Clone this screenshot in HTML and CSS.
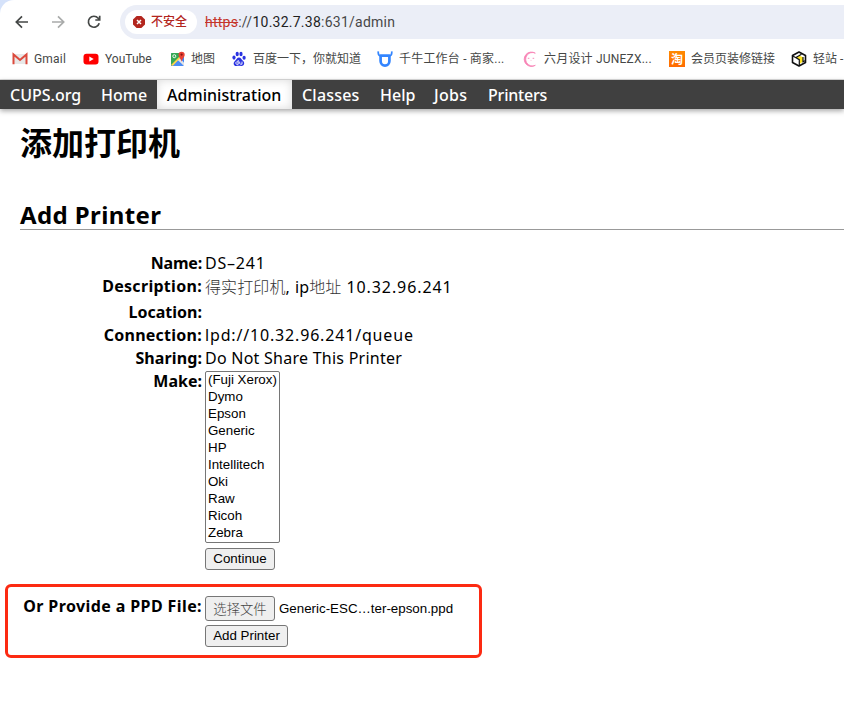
FILE: index.html
```html
<!DOCTYPE html>
<html lang="zh-CN">
<head>
<meta charset="utf-8">
<title>添加打印机</title>
<link rel="stylesheet" href="styles.css">
</head>
<body>
<header class="browser">
  <div class="toolbar">
    <svg class="nav-icon" viewBox="0 0 16 16"><path d="M14 8H2.5M8 2.3L2.3 8L8 13.7"/></svg>
    <svg class="nav-icon off" viewBox="0 0 16 16"><path d="M2 8H13.5M8 2.3L13.7 8L8 13.7"/></svg>
    <svg class="nav-icon" viewBox="0 0 16 16"><path d="M13.2 9.2A5.5 5.5 0 1 1 12.2 4.3L13.7 6M13.7 1.8V6H9.3"/></svg>
    <div class="address">
      <div class="chip">
        <svg width="12" height="12" viewBox="0 0 12 12"><path d="M3.6 0H8.4L12 3.6V8.4L8.4 12H3.6L0 8.4V3.6Z" fill="#b3261e"/><path d="M4 4L8 8M8 4L4 8" stroke="#fff" stroke-width="1.5"/></svg>
        <span>不安全</span>
      </div>
      <div class="url"><s>https</s>://<b>10.32.7.38</b>:631/admin</div>
    </div>
  </div>
  <nav class="bookmarks">
    <a class="b-gmail"><svg viewBox="0 0 16 16"><path d="M2 3H14V13H2Z" fill="#e8e8e8"/><path d="M1.5 13.3V3.5L8 9L14.5 3.5V13.3" fill="none" stroke="#dc4a3d" stroke-width="2"/></svg><span>Gmail</span></a>
    <a class="b-youtube"><svg viewBox="0 0 16 16"><rect x="0.5" y="2.8" width="15" height="10.6" rx="3" fill="#f00"/><path d="M6.3 5.5V10.6L10.7 8Z" fill="#fff"/></svg><span>YouTube</span></a>
    <a class="b-maps"><svg viewBox="0 0 16 16"><rect x="1" y="2" width="13" height="13" rx="1" fill="#4285f4"/><path d="M1 3Q1 2 2 2H14L1 15Z" fill="#34a853"/><path d="M1 14L13 2L14 4L3 15Z" fill="#fbd34c"/><path d="M3 15L8 9.5L13.5 15Z" fill="#4c8df6"/><path d="M8 9.3L10 7.4L14 11.5V15Z" fill="#e3e5e8"/><circle cx="4.3" cy="5.2" r="1.5" fill="none" stroke="#fff" stroke-width=".9"/><path d="M11.6 11C11.4 8 8.5 6.5 8.5 3.8A3.1 3.1 0 0 1 14.7 3.8C14.7 6.5 11.8 8 11.6 11Z" fill="#e94235"/><circle cx="11.6" cy="3.6" r="1.1" fill="#811411"/></svg><span>地图</span></a>
    <a class="b-baidu"><svg viewBox="0 0 16 16" fill="#2932e1"><ellipse cx="3" cy="6.6" rx="1.6" ry="2.1"/><ellipse cx="6.2" cy="3" rx="1.6" ry="2.2"/><ellipse cx="10" cy="3" rx="1.6" ry="2.2"/><ellipse cx="13.1" cy="6.7" rx="1.6" ry="2"/><path d="M8 6.5C10 6.5 10.5 8.7 12.2 10C14.2 12 13 15 10.5 15C9 15 7 14.6 5.5 15C2.7 15.3 1.8 12 3.7 10.2C5.5 8.7 6 6.5 8 6.5Z"/><path d="M7.2 9V13.3H5.7Q4.6 13 4.8 11.7Q5 10.6 7 10.8M8.7 10.6V12.6Q8.7 13.3 11 13.2V10.6" fill="none" stroke="#fff" stroke-width=".9"/></svg><span>百度一下，你就知道</span></a>
    <a class="b-qianniu"><svg viewBox="0 0 16 16"><path d="M3.6 4.6H12.4V10A4.4 4.6 0 0 1 3.6 10Z" fill="none" stroke="#3385ff" stroke-width="2.7" stroke-linejoin="round"/><path d="M1.3 .3Q.8 4.5 3.6 5M14.7 .3Q15.2 4.5 12.4 5" fill="none" stroke="#3385ff" stroke-width="1.7"/></svg><span>千牛工作台 - 商家...</span></a>
    <a class="b-june"><svg viewBox="0 0 16 16"><path d="M13.3 2.2A7.2 7.2 0 1 0 13.3 14.3A6.7 6.7 0 1 1 13.3 2.2Z" fill="#f783b5" stroke="#f783b5" stroke-width=".8"/><path d="M5.8 7.3H7.4M10.6 7.3H12.2" stroke="#f48dbb"/><path d="M8.3 9.4H9.8" stroke="#fbc5dc" stroke-width=".7"/></svg><span>六月设计 JUNEZX...</span></a>
    <a class="b-tao"><i class="tao">淘</i><span>会员页装修链接</span></a>
    <a class="b-qing"><svg viewBox="0 0 16 16"><path d="M8 1L14.5 4.5V11.5L8 15L1.5 11.5V4.5Z" fill="#fff" stroke="#111" stroke-width="1.6" stroke-linejoin="round"/><path d="M5 6.7L8.5 4.7L12 6.3V10.5L8.6 13V8.7Z" fill="#ffe51f"/><path d="M1.8 5L5 6.7L8.3 8.7V14M5 6.5L10.5 3.2M12 6V10.8L14 9.8" fill="none" stroke="#111" stroke-width="1.2"/></svg><span>轻站 -</span></a>
  </nav>
</header>
<nav class="cups">
  <a class="c1"><span>CUPS.org</span></a><a class="c2"><span>Home</span></a><a class="c3 active"><span>Administration</span></a><a class="c4"><span>Classes</span></a><a class="c5"><span>Help</span></a><a class="c6"><span>Jobs</span></a><a class="c7"><span>Printers</span></a>
</nav>
<main>
  <h1>添加打印机</h1>
  <h2><span>Add Printer</span></h2>
  <div class="form">
    <div class="row"><label class="l-name">Name:</label><div class="v-name">DS–241</div></div>
    <div class="row tall"><label class="l-desc">Description:</label><div class="v-desc"><span class="han">得实打印机</span>, ip<span class="han">地址</span> <span class="ip">10.32.96.241</span></div></div>
    <div class="row"><label class="l-loc">Location:</label><div></div></div>
    <div class="row"><label class="l-conn">Connection:</label><div class="v-conn">lpd://10.32.96.241/queue</div></div>
    <div class="row"><label class="l-share">Sharing:</label><div class="v-share">Do Not Share This Printer</div></div>
    <div class="row make"><label class="l-make">Make:</label>
      <ul class="list"><li>(Fuji Xerox)</li><li>Dymo</li><li>Epson</li><li>Generic</li><li>HP</li><li>Intellitech</li><li>Oki</li><li>Raw</li><li>Ricoh</li><li>Zebra</li></ul>
    </div>
    <div class="row"><label></label><button class="btn-continue">Continue</button></div>
  </div>
  <section class="ppd">
    <div class="row"><label class="l-ppd">Or Provide a PPD File:</label><div class="file"><button class="btn-file">选择文件</button><span>Generic-ESC…ter-epson.ppd</span></div></div>
    <div class="row"><label></label><button class="btn-add">Add Printer</button></div>
  </section>
</main>
</body>
</html>
```

FILE: styles.css
```css
* { box-sizing: border-box; }
body { margin: 0; width: 844px; height: 714px; overflow: hidden; background: #fff; color: #000; font: 16px/23px "Noto Sans", "Noto Sans CJK SC", sans-serif; }
h1, h2, ul { margin: 0; padding: 0; }
.browser { height: 80px; background: #fff; border-bottom: 1px solid #dcdcdc; border-top-left-radius: 14px; box-shadow: -10px -10px 0 10px #d5e2fa; font-family: Roboto, "Noto Sans CJK SC", sans-serif; }
.toolbar { height: 39px; padding: 5px 0 0 14px; display: flex; align-items: center; }
.nav-icon { width: 16px; height: 16px; margin-right: 20px; fill: none; stroke: #444746; stroke-width: 1.7; flex: none; }
.nav-icon.off { stroke: #a9abaa; }
.address { flex: 1; height: 34px; margin-left: -2px; padding-left: 5px; border-radius: 17px 0 0 17px; background: #ebeef7; display: flex; align-items: center; }
.chip { width: 72px; height: 24px; border-radius: 12px; padding-left: 8px; background: #fff; display: flex; align-items: center; gap: 6px; color: #b3261e; font-size: 12px; font-weight: 500; white-space: nowrap; }
.url { margin-left: 8px; padding-top: 1px; font-size: 14px; color: #474747; letter-spacing: .25px; white-space: nowrap; }
.url b { font-weight: 400; color: #1f1f1f; }
.url s { color: #c5352b; }
.bookmarks { height: 40px; padding-left: 12px; display: flex; align-items: center; color: #454746; font-size: 12px; white-space: nowrap; }
.bookmarks a { display: flex; align-items: center; gap: 6px; flex: none; }
.bookmarks span { padding-top: 1px; }
.bookmarks svg { width: 16px; height: 16px; flex: none; }
.b-gmail { width: 71px; letter-spacing: .2px; }
.b-youtube { width: 87px; }
.b-maps { width: 61px; }
.bookmarks .b-maps { gap: 5px; }
.b-baidu { width: 146px; }
.b-qianniu { width: 145px; letter-spacing: .2px; }
.b-june { width: 147px; letter-spacing: .2px; }
.b-tao { width: 122px; }
.tao { width: 16px; height: 16px; background: linear-gradient(#ff8a00, #ff6a00); color: #fff; font: bold 12px/16px "Noto Sans CJK SC", sans-serif; text-align: center; }
.cups { height: 29px; background: #404040; box-shadow: 0 2px 5px rgba(0,0,0,.35); display: flex; color: #fff; font-weight: 500; line-height: 31px; white-space: nowrap; }
.cups a { padding-left: 10px; flex: none; }
.c1 { width: 91px; }
.c2 { width: 66px; }
.c3 { width: 135px; letter-spacing: .03px; }
.c4 { width: 78px; letter-spacing: .2px; }
.c5 { width: 54px; }
.c6 { width: 54px; letter-spacing: .3px; }
.c7 { width: 80px; letter-spacing: -.2px; }
.active { background: #fff; color: #000; box-shadow: inset 0 0 10px rgba(0,0,0,.15); }
main { padding-left: 20px; }
h1 { padding-top: 12px; height: 90px; font: bold 32px/40px "Noto Sans CJK SC", sans-serif; }
h2 { height: 31px; border-bottom: 1px solid #999; font-size: 24px; line-height: 32px; letter-spacing: .4px; }
.form { padding-top: 22px; height: 354px; }
.row { display: flex; gap: 3px; height: 23px; white-space: nowrap; }
.row label { width: 182px; flex: none; display: flex; justify-content: flex-end; font-weight: 700; }
.l-name { letter-spacing: -.2px; }
.l-desc { letter-spacing: .3px; }
.l-conn { letter-spacing: .25px; }
.l-share { letter-spacing: .1px; }
.l-ppd { letter-spacing: .4px; }
.v-name { letter-spacing: .8px; }
.ip { letter-spacing: .92px; }
.v-desc { letter-spacing: .1px; word-spacing: .8px; }
.v-conn { letter-spacing: .83px; }
.v-share { letter-spacing: .25px; }
.row.tall { height: 26px; }
.han { font-family: "Noto Sans CJK SC", sans-serif; font-weight: 300; color: #333; }
.row.make { height: 178px; }
.list { width: 75px; height: 172px; margin-top: 1px; border: 1px solid #767676; border-radius: 2px; list-style: none; padding: 0 2px; font: 13.33px/17px "Liberation Sans", sans-serif; }
.list li { height: 17px; line-height: 15px; }
button { height: 22px; padding: 0; border: 1px solid #767676; border-radius: 3px; background: #efefef; color: #000; font: 13.33px/18px "Liberation Sans", "Noto Sans CJK SC", sans-serif; }
.btn-continue { width: 70px; }
.ppd { width: 477px; height: 74px; margin-left: -15px; border: 3px solid #fc2a12; border-radius: 6px; padding: 9px 0 0 12px; }
.ppd .row { height: 29px; }
.ppd .row label { line-height: 21px; }
.file { display: flex; gap: 4px; font: 13.33px/25px "Liberation Sans", sans-serif; }
.btn-file { width: 70px; height: 25px; color: #444; font-weight: 300; font-family: "Noto Sans CJK SC", sans-serif; }
.btn-add { width: 83px; }
```
